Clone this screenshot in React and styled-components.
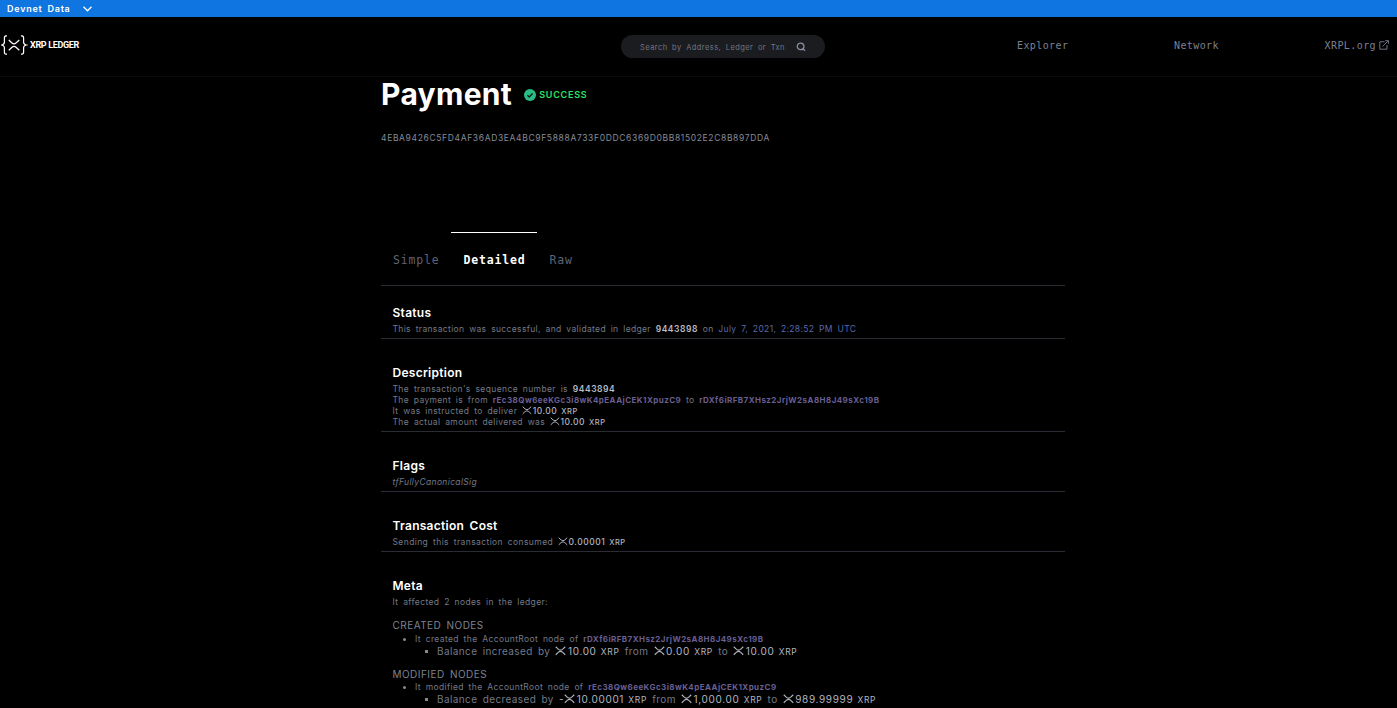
import React from "react";
import styled, { createGlobalStyle } from "styled-components";

const sans = `Inter, "Liberation Sans", sans-serif`;
const mono = `"DejaVu Sans Mono", "Liberation Mono", monospace`;

const GlobalStyle = createGlobalStyle`
  * { box-sizing: border-box; }
  html, body { margin: 0; background: #000; }
  body { font-family: ${sans}; color: #747987; height: 708px; overflow: hidden; }
`;

const Page = styled.div`
  height: 708px;
  overflow: hidden;
  background: #000;
`;

const Banner = styled.div`
  display: flex;
  align-items: center;
  gap: 12px;
  height: 17px;
  padding-left: 7px;
  background: #0f75e0;
  color: #fff;
  font-size: 9px;
  font-weight: 600;
  letter-spacing: 0.75px;
  word-spacing: 2px;
`;

const Header = styled.header`
  display: flex;
  align-items: center;
  height: 60px;
  padding-bottom: 3px;
  border-bottom: 1px solid #0b0b0c;
`;

const Brand = styled.div`
  display: flex;
  align-items: center;
  gap: 2px;
  width: 621px;
  padding-left: 1px;
  color: #fff;
  font-family: Roboto, ${sans};
  font-size: 9px;
  font-weight: 700;
  letter-spacing: -0.33px;
`;

const Search = styled.div`
  display: flex;
  align-items: center;
  justify-content: space-between;
  width: 204px;
  height: 23px;
  margin-top: 3px;
  padding: 1px 19px 0;
  border-radius: 12px;
  background: #1b1c20;
  color: #717684;
  font-size: 7.5px;
  letter-spacing: 0.44px;
  word-spacing: 2px;
  white-space: nowrap;
`;

const Nav = styled.nav`
  display: flex;
  flex: 1;
  justify-content: space-between;
  padding: 0 8px 0 192px;
  font-family: ${mono};
  font-size: 10px;
  letter-spacing: 0.4px;
  color: #7c8190;
`;

const NavItem = styled.span`
  display: flex;
  align-items: center;
  gap: 3px;
`;

const Main = styled.main`
  width: 684px;
  margin-left: 381px;
`;

const TitleRow = styled.div`
  display: flex;
  align-items: center;
  gap: 12px;
  height: 36px;
`;

const Title = styled.h1`
  margin: -2px 0 0;
  color: #fff;
  font-size: 30px;
  line-height: 36px;
  font-weight: 700;
  letter-spacing: 0.32px;
`;

const Result = styled.span`
  display: flex;
  align-items: center;
  gap: 3px;
  color: #2be565;
  font-size: 9px;
  font-weight: 600;
  line-height: 11px;
  letter-spacing: 0.75px;
`;

const ResultText = styled.span`
  padding-bottom: 1px;
`;

const Hash = styled.div`
  margin-top: 19px;
  height: 12px;
  font-size: 8.5px;
  line-height: 12px;
  letter-spacing: 0.645px;
  color: #858a98;
`;

const Tabs = styled.div`
  display: flex;
  height: 54px;
  margin-top: 88px;
  border-bottom: 1px solid #2a2c33;
`;

const Tab = styled.div`
  height: 53px;
  padding: 0 12px;
  border-top: 1px solid ${(p) => (p.$active ? "#fff" : "transparent")};
  color: ${(p) => (p.$active ? "#fff" : "#5f6475")};
  font-family: ${mono};
  font-size: 11.5px;
  font-weight: ${(p) => (p.$active ? 700 : 400)};
  line-height: 54px;
  letter-spacing: 0.82px;
`;

const Section = styled.section`
  padding: ${(p) => (p.$first ? 18 : 25)}px 11.5px 3px;
  border-bottom: ${(p) => (p.$last ? "none" : "1px solid #2a2c33")};
`;

const SectionTitle = styled.h2`
  margin: 0 0 3px;
  color: #fff;
  font-size: 12px;
  line-height: 17px;
  font-weight: 600;
  letter-spacing: 0.28px;
  word-spacing: 2px;
`;

const Line = styled.div`
  height: 11px;
  font-size: 8.5px;
  line-height: 11px;
  letter-spacing: ${(p) => p.$spacing || 0.38}px;
  word-spacing: 2px;
  white-space: nowrap;
  font-style: ${(p) => (p.$italic ? "italic" : "normal")};
`;

const Value = styled.b`
  color: #b9bcc6;
  font-weight: 600;
  letter-spacing: 0.55px;
`;

const DateText = styled.span`
  color: #586aae;
`;

const Account = styled.b`
  color: #685f92;
  font-size: 8px;
  font-weight: 700;
  letter-spacing: 0.44px;
`;

const AmountText = styled.span`
  color: #b3b6c0;
  font-weight: ${(p) => (p.$large ? 400 : 500)};
  letter-spacing: ${(p) => (p.$large ? 0.65 : 0.5)}px;
  word-spacing: ${(p) => (p.$large ? 0.8 : 1.2)}px;
  small { font-size: ${(p) => (p.$large ? 8.5 : 7.5)}px; }
  svg { vertical-align: -1px; margin-right: ${(p) => (p.$large ? 1.5 : 0.8)}px; }
`;

const NodesTitle = styled.h3`
  margin: 11px 0 ${(p) => p.$bottom || 0}px;
  color: #7d8290;
  font-size: 10px;
  line-height: 13px;
  font-weight: 400;
  letter-spacing: 0.47px;
  word-spacing: 2px;
`;

const Item = styled.div`
  display: flex;
  align-items: center;
  height: 12px;
  padding-left: ${(p) => (p.$sub ? 32 : 10.5)}px;
  gap: ${(p) => (p.$sub ? 9.5 : 9)}px;
  font-size: ${(p) => (p.$sub ? 10 : 8.5)}px;
  letter-spacing: ${(p) => (p.$sub ? 0.4 : 0.37)}px;
  word-spacing: 2px;
  line-height: 12px;
  white-space: nowrap;
  &::before {
    content: "";
    width: 3px;
    height: 3px;
    border-radius: ${(p) => (p.$sub ? 0 : 2)}px;
    background: #858a98;
  }
`;

const XrpMark = ({ size = 9 }) => (
  <svg width={size * 1.1} height={size * 0.95} viewBox="0 0 22 19" fill="none" stroke="currentColor" strokeWidth="2.2">
    <path d="M1.5 1.5 L7 6.7 Q11 10 15 6.7 L20.5 1.5" />
    <path d="M1.5 17.5 L7 12.3 Q11 9 15 12.3 L20.5 17.5" />
  </svg>
);

const Logo = () => (
  <svg width="27" height="20" viewBox="0 0 27 20" fill="none" stroke="#fff" strokeWidth="1.2">
    <path d="M6 .8H5Q3.4 .8 3.4 3V7.3Q3.4 9.3 .8 10Q3.4 10.7 3.4 12.7V17Q3.4 19.2 5 19.2H6" />
    <path d="M20 .8H21Q22.6 .8 22.6 3V7.3Q22.6 9.3 25.2 10Q22.6 10.7 22.6 12.7V17Q22.6 19.2 21 19.2H20" />
    <path d="M7.8 5L11 8Q13 9.8 15 8L18.3 5M7.8 15.2L11 12.2Q13 10.4 15 12.2L18.3 15.2" />
  </svg>
);

const Amount = ({ value, large, sign }) => (
  <AmountText $large={large}>
    {sign}
    <XrpMark size={large ? 10 : 9} />
    {value} <small>XRP</small>
  </AmountText>
);

const SENDER = "rEc38Qw6eeKGc3i8wK4pEAAjCEK1XpuzC9";
const RECEIVER = "rDXf6iRFB7XHsz2JrjW2sA8H8J49sXc19B";

export default function App() {
  return (
    <Page>
      <GlobalStyle />
      <Banner>
        <span>Devnet Data</span>
        <svg width="9" height="6" viewBox="0 0 9 6" fill="none" stroke="#fff" strokeWidth="1.3">
          <path d="M.5 .8L4.5 4.8L8.5 .8" />
        </svg>
      </Banner>
      <Header>
        <Brand>
          <Logo />
          <span>XRP LEDGER</span>
        </Brand>
        <Search>
          <span>Search by Address, Ledger or Txn</span>
          <svg width="10" height="10" viewBox="0 0 10 10" fill="none" stroke="#8a8f9d" strokeWidth="1.3">
            <circle cx="4.6" cy="4.4" r="3.3" />
            <path d="M7 6.8L9 8.8" />
          </svg>
        </Search>
        <Nav>
          <NavItem>Explorer</NavItem>
          <NavItem>Network</NavItem>
          <NavItem>
            XRPL.org
            <svg width="10" height="10" viewBox="0 0 10 10" fill="none" stroke="currentColor" strokeWidth="0.9">
              <path d="M5.5 1.8H.8V9.2H8V5M3.5 6.5L9.2.8M6.2.7H9.4V3.8" />
            </svg>
          </NavItem>
        </Nav>
      </Header>
      <Main>
        <TitleRow>
          <Title>Payment</Title>
          <Result>
            <svg width="12" height="12" viewBox="0 0 12 12">
              <circle cx="6" cy="6" r="6" fill="#2bbd85" />
              <path d="M3.4 6.2L5.2 7.9L8.6 4.4" fill="none" stroke="#06251a" strokeWidth="1.4" />
            </svg>
            <ResultText>SUCCESS</ResultText>
          </Result>
        </TitleRow>
        <Hash>4EBA9426C5FD4AF36AD3EA4BC9F5888A733F0DDC6369D0BB81502E2C8B897DDA</Hash>
        <Tabs>
          <Tab>Simple</Tab>
          <Tab $active>Detailed</Tab>
          <Tab>Raw</Tab>
        </Tabs>
        <Section $first>
          <SectionTitle>Status</SectionTitle>
          <Line $spacing={0.35}>
            This transaction was successful, and validated in ledger <Value>9443898</Value> on{" "}
            <DateText>July 7, 2021, 2:28:52 PM UTC</DateText>
          </Line>
        </Section>
        <Section>
          <SectionTitle>Description</SectionTitle>
          <Line>
            The transaction's sequence number is <Value>9443894</Value>
          </Line>
          <Line $spacing={0.35}>
            The payment is from <Account>{SENDER}</Account> to <Account>{RECEIVER}</Account>
          </Line>
          <Line>
            It was instructed to deliver <Amount value="10.00" />
          </Line>
          <Line>
            The actual amount delivered was <Amount value="10.00" />
          </Line>
        </Section>
        <Section>
          <SectionTitle>Flags</SectionTitle>
          <Line $italic $spacing={0.35}>tfFullyCanonicalSig</Line>
        </Section>
        <Section>
          <SectionTitle>Transaction Cost</SectionTitle>
          <Line $spacing={0.4}>
            Sending this transaction consumed <Amount value="0.00001" />
          </Line>
        </Section>
        <Section $last>
          <SectionTitle>Meta</SectionTitle>
          <Line>It affected 2 nodes in the ledger:</Line>
          <NodesTitle $bottom={1}>CREATED NODES</NodesTitle>
          <Item>
            <span>
              It created the AccountRoot node of <Account>{RECEIVER}</Account>
            </span>
          </Item>
          <Item $sub>
            <span>
              Balance increased by <Amount large value="10.00" /> from <Amount large value="0.00" /> to{" "}
              <Amount large value="10.00" />
            </span>
          </Item>
          <NodesTitle>MODIFIED NODES</NodesTitle>
          <Item>
            <span>
              It modified the AccountRoot node of <Account>{SENDER}</Account>
            </span>
          </Item>
          <Item $sub>
            <span>
              Balance decreased by <Amount large sign="-" value="10.00001" /> from{" "}
              <Amount large value="1,000.00" /> to <Amount large value="989.99999" />
            </span>
          </Item>
        </Section>
      </Main>
    </Page>
  );
}
